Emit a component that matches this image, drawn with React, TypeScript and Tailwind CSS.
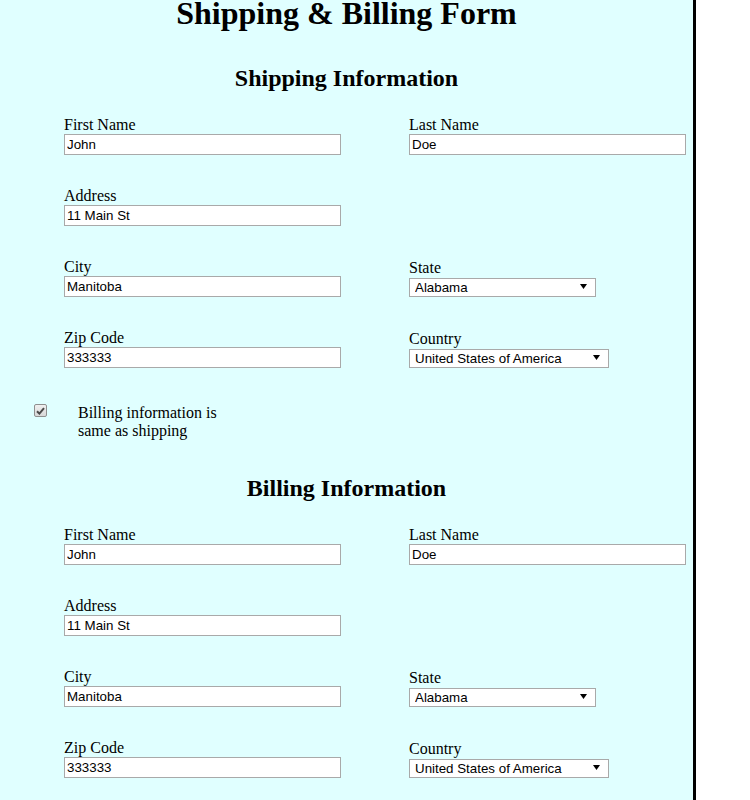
import React from "react";

const serif = { fontFamily: '"Liberation Serif", "Times New Roman", serif' };

function TextField({ label, value }: { label: string; value: string }) {
  return (
    <div className="flex flex-col">
      <label className="block text-[16px] leading-[18px] text-black">{label}</label>
      <input
        readOnly
        value={value}
        className="block h-[21px] w-[277px] border border-[#a9a9a9] bg-white px-[2px] text-[13.333px] text-black outline-none font-['Liberation_Sans',Arial,sans-serif]"
      />
    </div>
  );
}

function SelectField({ label, value, width }: { label: string; value: string; width: string }) {
  return (
    <div className="flex flex-col pt-[1px]">
      <label className="block text-[16px] leading-[18px] text-black">{label}</label>
      <div className={`relative mt-[1px] h-[19px] ${width}`}>
        <select
          value={value}
          onChange={() => {}}
          className="block h-[19px] w-full appearance-none rounded-none border border-[#a9a9a9] bg-white py-0 pl-[5px] pr-[18px] text-[13.333px] leading-[15px] text-black outline-none font-['Liberation_Sans',Arial,sans-serif]"
        >
          <option>{value}</option>
        </select>
        <svg
          className="pointer-events-none absolute right-[9px] top-[6px]"
          width="7"
          height="5"
          viewBox="0 0 7 5"
        >
          <path d="M0 0 H7 L3.5 5 Z" fill="#000" />
        </svg>
      </div>
    </div>
  );
}

function Section({ title }: { title: string }) {
  return (
    <div>
      <h2 className="m-0 text-center text-[24px] font-bold leading-[28px]">{title}</h2>
      <div className="mt-[24px] grid grid-cols-[345px_1fr] gap-y-[32px] pl-[64px]">
        <TextField label="First Name" value="John" />
        <TextField label="Last Name" value="Doe" />
        <TextField label="Address" value="11 Main St" />
        <div />
        <TextField label="City" value="Manitoba" />
        <SelectField label="State" value="Alabama" width="w-[187px]" />
        <TextField label="Zip Code" value="333333" />
        <SelectField label="Country" value="United States of America" width="w-[200px]" />
      </div>
    </div>
  );
}

export default function App() {
  return (
    <div className="min-h-[800px] bg-white">
      <div
        className="min-h-[800px] w-[696px] border-r-[3px] border-black bg-[#e0ffff] pb-[40px] text-black"
        style={serif}
      >
        <h1 className="m-0 text-center text-[32px] font-bold leading-[27px]">Shipping &amp; Billing Form</h1>
        <div className="mt-[37px]">
          <Section title="Shipping Information" />
        </div>
        <div className="mt-[36px] flex items-start">
          <span className="ml-[34px] mt-0 flex h-[13px] w-[13px] items-center justify-center rounded-[2px] border border-[#8f8f8f] bg-gradient-to-b from-[#f0f0f0] to-[#d8d8d8]">
            <svg width="9" height="8" viewBox="0 0 9 8">
              <path d="M1 4.2 L3.4 6.6 L8 1.2" stroke="#4a4a4a" strokeWidth="2" fill="none" />
            </svg>
          </span>
          <label className="ml-[31px] w-[150px] text-[16px] leading-[18px]">
            Billing information is same as shipping
          </label>
        </div>
        <div className="mt-[34px]">
          <Section title="Billing Information" />
        </div>
      </div>
    </div>
  );
}
